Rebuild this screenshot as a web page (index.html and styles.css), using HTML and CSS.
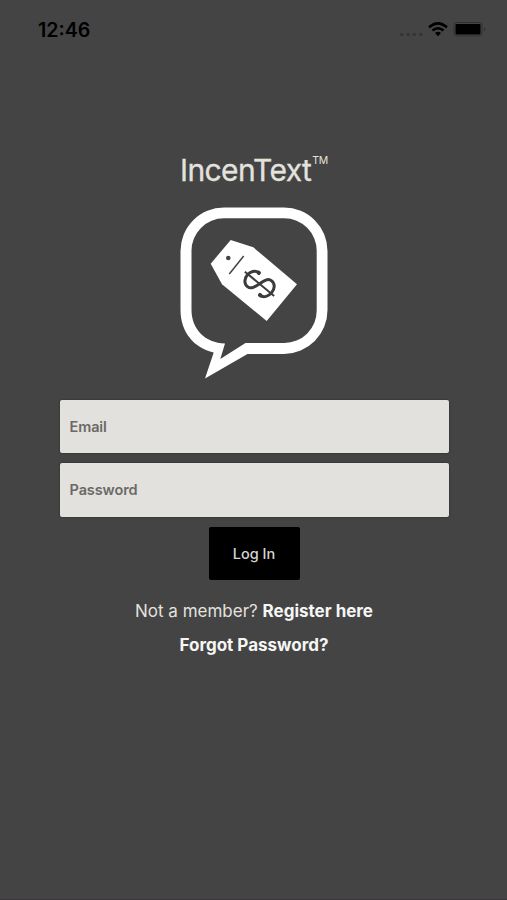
FILE: index.html
```html
<!DOCTYPE html>
<html lang="en">
<head>
  <meta charset="UTF-8">
  <meta name="viewport" content="width=device-width, initial-scale=1.0">
  <title>IncenText - Log In</title>
  <link rel="stylesheet" href="styles.css">
</head>
<body>
  <header class="status-bar">
    <span class="time">12:46</span>
    <svg class="status-icons" width="90" height="20" viewBox="0 0 90 20">
      <g fill="#353535">
        <rect x="0" y="13" width="3.5" height="3" rx="1"/>
        <rect x="6.500" y="13" width="3.5" height="3" rx="1"/>
        <rect x="12.500" y="13" width="3.5" height="3" rx="1"/>
        <rect x="19" y="13" width="3.5" height="3" rx="1"/>
      </g>
      <g fill="none" stroke="#000" stroke-width="2.6">
        <path d="M29 7.200 Q38 -0.600 47 7.200"/>
        <path d="M32.500 10.600 Q38 5.900 43.500 10.600"/>
      </g>
      <path d="M35 13 Q38 10.600 41 13 L38 16.200 Z"/>
      <rect x="54" y="2.500" width="28" height="13.500" rx="3" fill="none" stroke="#303030"/>
      <rect x="55.500" y="4" width="25" height="10.500" rx="1"/>
      <path d="M84 7 q2 2.200 0 4.500 z" fill="#2b2b2b"/>
    </svg>
  </header>

  <main class="login">
    <h1 class="title">IncenText<span class="tm">TM</span></h1>
    <svg class="logo" width="148" height="172" viewBox="10 12 148 172">
      <path fill="#fff" fill-rule="evenodd" d="M54 12.500 H114 A43.500 43.500 0 0 1 157.500 56 V115 A44 44 0 0 1 114 159 H77.500 L35 183.500 L43.700 157.500 C24 153 10.500 137 10.500 115 V56 A43.500 43.500 0 0 1 54 12.500 Z
        M54 23.300 A32.500 32.500 0 0 0 21.500 56 V115 C21.500 134 35 148 55 148.500 L50.300 164 L75.500 148 H114 A32.500 32.500 0 0 0 146.700 115 V56 A32.500 32.500 0 0 0 114 23.300 Z"/>
      <path fill="#fff" d="M60.700 45 L83.300 52.300 L127 89.300 L96.700 126 L52 89.300 L40.700 68.700 Z"/>
      <circle cx="58.300" cy="63" r="2.300" fill="#444"/>
      <path d="M73.700 61 L59.300 79" stroke="#444" stroke-width="1.500"/>
      <g transform="translate(89.500 88.800) rotate(-50.400)" fill="none" stroke="#3c3c3c">
        <path d="M0 -19 V19" stroke-width="2"/>
        <path d="M8.300 -7.500 C7.500 -17.500 -9.800 -17.500 -9.800 -7.500 C-9.800 2 10 -2 10 7.500 C10 17.500 -8 17.500 -8.700 7.500" stroke-width="3" stroke-linecap="round"/>
        <path d="M8 -8 V-7.500 M-8.300 7.500 V8" stroke-width="4" stroke-linecap="round"/>
      </g>
    </svg>

    <form class="login-form">
      <input class="field" type="email" placeholder="Email">
      <input class="field" type="password" placeholder="Password">
      <button class="btn" type="submit">Log In</button>
    </form>

    <p class="register">Not a member? <a href="#">Register here</a></p>
    <p class="forgot"><a href="#">Forgot Password?</a></p>
  </main>
</body>
</html>
```
FILE: styles.css
```css
* {
  box-sizing: border-box;
}
body {
  margin: 0;
  height: 900px;
  background-color: #444;
  border-bottom: 1px solid #3b363b;
  font-family: Inter, "Liberation Sans", sans-serif;
  color: #e3e2df;
  overflow: hidden;
}
.status-bar {
  display: flex;
  justify-content: space-between;
  height: 60px;
  padding: 20px 17px 0 38px;
  color: #000;
}
.time {
  font-size: 19.600px;
  line-height: 21px;
  font-weight: 600;
}
.login {
  display: flex;
  flex-direction: column;
  align-items: center;
  padding: 90px 0 0 1px;
}
.title {
  display: flex;
  margin: 0;
  height: 40px;
  font-size: 30px;
  line-height: 40px;
  font-weight: 400;
  letter-spacing: -0.600px;
  -webkit-text-stroke: 0.300px #e3e2df;
}
.tm {
  margin-left: 1px;
  font-size: 10.500px;
  line-height: 21px;
  letter-spacing: -0.300px;
  -webkit-text-stroke: 0;
}
.logo {
  margin-top: 17px;
}
.login-form {
  display: flex;
  flex-direction: column;
  align-items: center;
  gap: 10px;
  width: 389px;
  margin-top: 20.500px;
}
.field {
  width: 389px;
  height: 53.500px;
  padding: 0 10px;
  border: none;
  border-radius: 2px;
  background-color: #e2e1dd;
  box-shadow: 0 0 2px #222;
  font-family: inherit;
  font-size: 14.500px;
  font-weight: 600;
  letter-spacing: -0.100px;
}
.field::placeholder {
  color: #6a6967;
  opacity: 1;
}
.btn {
  width: 91px;
  height: 53px;
  padding: 0;
  border: none;
  border-radius: 2px;
  background-color: #000;
  color: #d6d5d3;
  font-family: inherit;
  font-size: 14.500px;
  font-weight: 500;
}
.register,
.forgot {
  margin: 0;
  font-size: 17px;
  line-height: 24px;
}
.register {
  margin-top: 19px;
}
.forgot {
  margin-top: 10px;
}
.register a,
.forgot a {
  color: #f6f6f5;
  font-weight: 700;
  text-decoration: none;
}
```
